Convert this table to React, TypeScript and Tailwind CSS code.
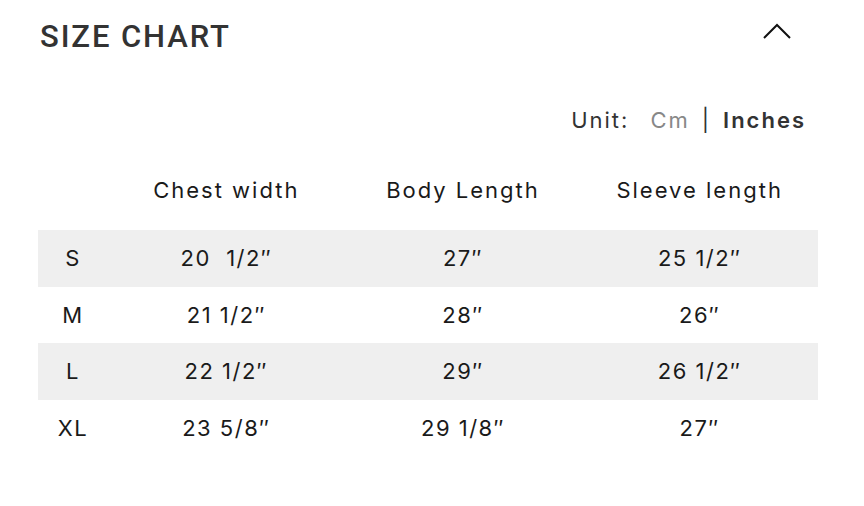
import React from "react";

const rows = [
  ["S", "20\u00a0 1/2\u2033", "27\u2033", "25 1/2\u2033"],
  ["M", "21 1/2\u2033", "28\u2033", "26\u2033"],
  ["L", "22 1/2\u2033", "29\u2033", "26 1/2\u2033"],
  ["XL", "23 5/8\u2033", "29 1/8\u2033", "27\u2033"],
];

export default function App() {
  return (
    <div className="w-[864px] h-[506px] bg-white text-[#1a1a1a]" style={{ fontFamily: "Inter, 'Noto Sans', sans-serif" }}>
      <div className="flex items-center justify-between pl-[40px] pr-[72px] pt-[17px] h-[38px] box-content">
        <h1 className="text-[31px] font-medium text-[#333] leading-none tracking-[1.9px]" style={{ fontFamily: "Roboto, 'Liberation Sans', sans-serif" }}>SIZE CHART</h1>
        <svg width="30" height="18" viewBox="0 0 30 18" className="mt-[-8px]">
          <path d="M2 15 L15 2 L28 15" fill="none" stroke="#111" strokeWidth="2" />
        </svg>
      </div>
      <div className="flex justify-end items-center pr-[58px] mt-[49px] h-[32px] text-[22px] tracking-[2px]">
        <span className="text-[#333]">Unit:</span>
        <span className="text-[#888] ml-[21px]">Cm</span>
        <span className="text-[#333] ml-[12px]">|</span>
        <span className="text-[#333] font-semibold ml-[12px]">Inches</span>
      </div>
      <div className="ml-[38px] w-[780px] mt-[16px] text-[22px] tracking-[2px]">
        <div className="grid grid-cols-[70px_1fr_1fr_1fr] h-[78px] items-center text-center pb-[1px]">
          <div></div>
          <div>Chest width</div>
          <div>Body Length</div>
          <div>Sleeve length</div>
        </div>
        {rows.map((r, i) => (
          <div key={i} className={`grid grid-cols-[70px_1fr_1fr_1fr] h-[56.5px] items-center text-center text-[22px] tracking-[1.5px] ${i % 2 === 0 ? "bg-[#efefef]" : ""}`}>
            {r.map((c, j) => (
              <div key={j} className="whitespace-pre pt-[1px]">{c}</div>
            ))}
          </div>
        ))}
      </div>
    </div>
  );
}
